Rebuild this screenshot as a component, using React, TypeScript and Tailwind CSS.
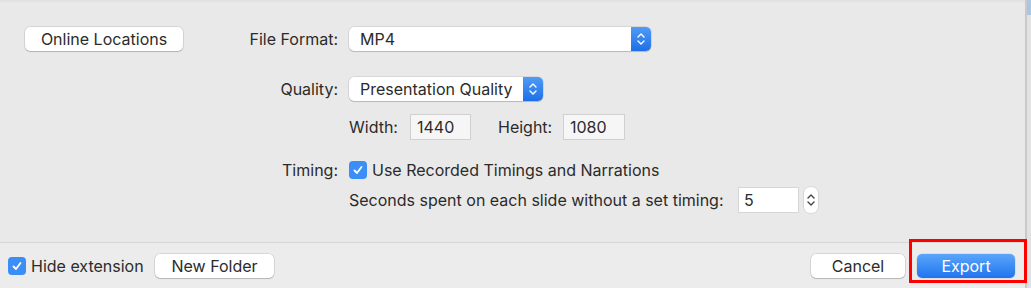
import React from "react";

const font = { fontFamily: 'Inter, "Liberation Sans", Arial, sans-serif' };

function Stepper({ blue }: { blue?: boolean }) {
	const stroke = blue ? "#ffffff" : "#444444";
	return (
		<svg width="10" height="16" viewBox="0 0 10 16" fill="none">
			<path d="M2 6 L5 3 L8 6" stroke={stroke} strokeWidth="1.4" strokeLinecap="round" strokeLinejoin="round" />
			<path d="M2 10 L5 13 L8 10" stroke={stroke} strokeWidth="1.4" strokeLinecap="round" strokeLinejoin="round" />
		</svg>
	);
}

function Popup({ value, width }: { value: string; width: string }) {
	return (
		<div className={`flex h-[24px] ${width} items-stretch rounded-[5px] bg-white shadow-[0_0_0_0.5px_rgba(0,0,0,0.15),0_1px_1px_rgba(0,0,0,0.15)]`}>
			<div className="flex flex-1 items-center pl-[11px] text-[#2b2b2b]">{value}</div>
			<div className="flex w-[20px] items-center justify-center rounded-r-[5px] bg-gradient-to-b from-[#4f9bf7] to-[#1d6fe6]">
				<Stepper blue />
			</div>
		</div>
	);
}

function Field({ value, width }: { value: string; width: string }) {
	return (
		<div className={`flex h-[26px] ${width} items-center border border-[#d0d0d0] bg-[#f6f6f6] pl-[6px] text-[#2b2b2b]`}>
			{value}
		</div>
	);
}

function Check() {
	return (
		<div className="flex h-[18px] w-[18px] shrink-0 items-center justify-center rounded-[4px] bg-[#3a8ef6]">
			<svg width="12" height="12" viewBox="0 0 12 12" fill="none">
				<path d="M2.5 6.5 L5 9 L9.5 3" stroke="#ffffff" strokeWidth="1.8" strokeLinecap="round" strokeLinejoin="round" />
			</svg>
		</div>
	);
}

function Button({ label, width }: { label: string; width: string }) {
	return (
		<div className={`flex h-[24px] ${width} items-center justify-center rounded-[5px] bg-white text-[#2b2b2b] shadow-[0_0_0_0.5px_rgba(0,0,0,0.18),0_1px_1px_rgba(0,0,0,0.15)]`}>
			{label}
		</div>
	);
}

export default function App() {
	return (
		<div className="flex h-[288px] w-[1031px] overflow-hidden bg-[#e9e9e9] text-[16px] text-[#2b2b2b]" style={font}>
			<div className="flex w-[1025px] flex-col border-t-[2px] border-[#e2e2e2]">
				{/* options area */}
				<div className="flex h-[240px] items-start pt-[25px]">
					<div className="w-[183px] pl-[25px]">
						<Button label="Online Locations" width="w-[158px]" />
					</div>
					<div className="grid content-start grid-cols-[155px_auto] gap-x-[11px]">
						<div className="flex h-[24px] items-center justify-end">File Format:</div>
						<Popup value="MP4" width="w-[302px]" />

						<div className="mt-[26px] flex h-[24px] items-center justify-end">Quality:</div>
						<div className="mt-[26px]">
							<Popup value="Presentation Quality" width="w-[194px]" />
						</div>

						<div />
						<div className="mt-[13px] flex items-center">
							<span className="w-[61px]">Width:</span>
							<Field value="1440" width="w-[61px]" />
							<span className="ml-[27px] w-[65px]">Height:</span>
							<Field value="1080" width="w-[62px]" />
						</div>

						<div className="mt-[20px] flex h-[20px] items-center justify-end">Timing:</div>
						<div className="mt-[20px] flex h-[20px] items-center gap-[5px]">
							<Check />
							<span>Use Recorded Timings and Narrations</span>
						</div>

						<div />
						<div className="mt-[7px] flex items-center">
							<span className="w-[389px] whitespace-nowrap">Seconds spent on each slide without a set timing:</span>
							<div className="flex h-[26px] w-[61px] items-center border border-[#d6d6d6] bg-white pl-[5px]">5</div>
							<div className="ml-[5px] flex h-[26px] w-[14px] items-center justify-center rounded-[6px] bg-white shadow-[0_0_0_0.5px_rgba(0,0,0,0.15)]">
								<Stepper />
							</div>
						</div>
					</div>
				</div>

				{/* bottom bar */}
				<div className="relative flex flex-1 items-center border-t border-[#d6d6d6] bg-[#ececec] pl-[8px] pr-[10px]">
					<Check />
					<span className="ml-[5px] w-[124px] whitespace-nowrap">Hide extension</span>
					<Button label="New Folder" width="w-[119px]" />
					<div className="ml-auto">
						<Button label="Cancel" width="w-[94px]" />
					</div>
					<div className="ml-[12px] flex h-[24px] w-[98px] items-center justify-center rounded-[5px] bg-gradient-to-b from-[#5aa5fb] to-[#1f74ee] text-white shadow-[0_0_0_0.5px_rgba(0,0,0,0.12)]">
						Export
					</div>
					<div className="pointer-events-none absolute left-[909px] top-[-4px] h-[44px] w-[118px] border-[3px] border-[#ff0000]" />
				</div>
			</div>
			<div className="flex w-[6px] flex-col border-l-[2px] border-[#c9c9c9] bg-[#e2e2e2]">
				<div className="h-[15px] bg-[#a8c6e6]" />
			</div>
		</div>
	);
}
